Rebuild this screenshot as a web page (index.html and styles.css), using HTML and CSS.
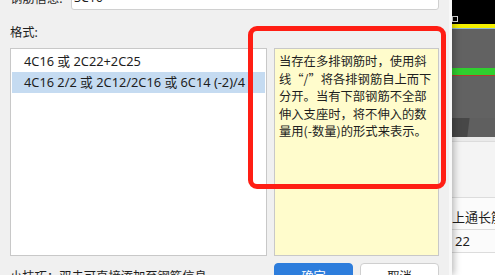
FILE: index.html
```html
<!DOCTYPE html>
<html lang="zh-CN">
<head>
  <meta charset="UTF-8" />
  <title>钢筋格式</title>
  <link rel="stylesheet" href="styles.css">
</head>
<body>
  <div class="screen">

    <!-- Dialog -->
    <div class="dialog">
      <div class="field-row">
        <span class="field-label">钢筋信息:</span>
        <div class="field-input">3C16</div>
      </div>

      <div class="fmt-label">格式:</div>

      <div class="fmt-area">
        <ul class="fmt-list">
          <li>4C16 或 2C22+2C25</li>
          <li class="selected">4C16 2/2 或 2C12/2C16 或 6C14 (-2)/4</li>
        </ul>
        <div class="tip">当存在多排钢筋时，使用斜<br>线“/”将各排钢筋自上而下<br>分开。当有下部钢筋不全部<br>伸入支座时，将不伸入的数<br>量用(-数量)的形式来表示。</div>
      </div>

      <div class="footer">
        <span class="hint">小技巧：双击可直接添加至钢筋信息</span>
        <div class="buttons">
          <button class="btn btn-primary">确定</button>
          <button class="btn">取消</button>
        </div>
      </div>
    </div>

    <!-- Background app behind the dialog -->
    <div class="side">
      <div class="band band-black"><span class="marker"></span></div>
      <div class="band band-yellow"></div>
      <div class="band band-blue"></div>
      <div class="band band-gray h39"></div>
      <div class="band band-green"></div>
      <div class="band band-red"></div>
      <div class="band band-gray h42"></div>
      <div class="band band-dark"></div>
      <div class="grid-head"></div>
      <div class="grid-blank"></div>
      <div class="grid-cell">上通长筋</div>
      <div class="grid-cell">22</div>
    </div>

    <!-- Annotation -->
    <div class="highlight"></div>
  </div>
</body>
</html>
```

FILE: styles.css
```css
* {
  box-sizing: border-box;
}
body {
  margin: 0;
  font-family: "Noto Sans", "Noto Sans CJK SC", sans-serif;
  font-size: 12.3px;
  color: #1e1e1e;
}

.screen {
  position: relative;
  display: flex;
  width: 495px;
  height: 275px;
  overflow: hidden;
  background: #fff;
}

/* Dialog */
.dialog {
  position: relative;
  z-index: 1;
  width: 452px;
  flex-shrink: 0;
  padding: 0 10px;
  background: #f0f0f0;
  border-right: 3px solid #f8f8f8;
  box-shadow: 2px 0 7px rgba(0, 0, 0, 0.28);
}

.field-row {
  display: flex;
  align-items: center;
  margin-top: -14px;
  height: 24px;
}

.field-label {
  width: 61px;
}

.field-input {
  flex: 1;
  height: 24px;
  line-height: 22px;
  padding-left: 2px;
  background: #fff;
  border: 1px solid #d0d0d0;
  border-radius: 3px;
}

.fmt-label {
  margin-top: 14px;
  line-height: 18px;
}

.fmt-area {
  display: flex;
  gap: 7px;
  margin-top: 6px;
  height: 208px;
}

.fmt-list {
  width: 257px;
  margin: 0;
  padding: 2px 0 0;
  list-style: none;
  font-size: 12.8px;
  background: #fff;
  border: 1px solid #c8c8c8;
}

.fmt-list li {
  height: 21px;
  line-height: 21px;
  margin: 0 1px;
  padding-left: 12px;
  white-space: nowrap;
}

.fmt-list li.selected {
  background: #c5dbf1;
}

.tip {
  width: 165px;
  padding: 4px 4px;
  font-family: "Noto Sans CJK SC", sans-serif;
  line-height: 17.5px;
  white-space: nowrap;
  background: #fffccc;
  border: 1px solid #c8c8c8;
}

.footer {
  display: flex;
  justify-content: space-between;
  align-items: center;
  margin-top: 7px;
}

.buttons {
  display: flex;
  gap: 7px;
}

.btn {
  width: 79px;
  height: 26px;
  font: inherit;
  color: #1e1e1e;
  background: #fff;
  border: 1px solid #cfcfcf;
  border-radius: 4px;
}

.btn-primary {
  color: #fff;
  background: #2d7ddc;
  border-color: #2d7ddc;
}

/* Background app */
.side {
  flex: 1;
  overflow: hidden;
}

.band-black {
  position: relative;
  height: 24px;
  background: #000;
}

.marker {
  position: absolute;
  left: 0;
  top: 16px;
  width: 6px;
  height: 6px;
  border: 1px solid #ddd;
}

.band-yellow {
  height: 4px;
  background: #f4f000;
}

.band-blue {
  height: 1px;
  background: #8db8dc;
}

.band-gray {
  background: #626262;
}

.h39 {
  height: 39px;
}

.h42 {
  height: 42px;
}

.band-green {
  height: 7px;
  background: #2fcf2f;
}

.band-red {
  height: 1px;
  background: #b23a30;
}

.band-dark {
  height: 19px;
  background: linear-gradient(97deg, #474747 17px, #5f5f5f 18px);
}

.grid-head {
  height: 5px;
  background: #eaeaea;
  border-bottom: 1px solid #dcdcdc;
}

.grid-blank {
  height: 56px;
  background: #f4f4f4;
  border-bottom: 1px solid #dcdcdc;
}

.grid-cell {
  height: 32px;
  padding-top: 4px;
  line-height: 31px;
  font-size: 13px;
  white-space: nowrap;
  background: #fbfbfb;
  border-bottom: 1px solid #dcdcdc;
}

.grid-cell + .grid-cell {
  height: 23px;
  padding-top: 0;
  line-height: 23px;
  padding-left: 3px;
}

/* Red annotation box */
.highlight {
  position: absolute;
  z-index: 2;
  left: 248px;
  top: 26px;
  width: 198px;
  height: 163px;
  border: 5.5px solid #ff1e14;
  border-radius: 9px;
}
```
